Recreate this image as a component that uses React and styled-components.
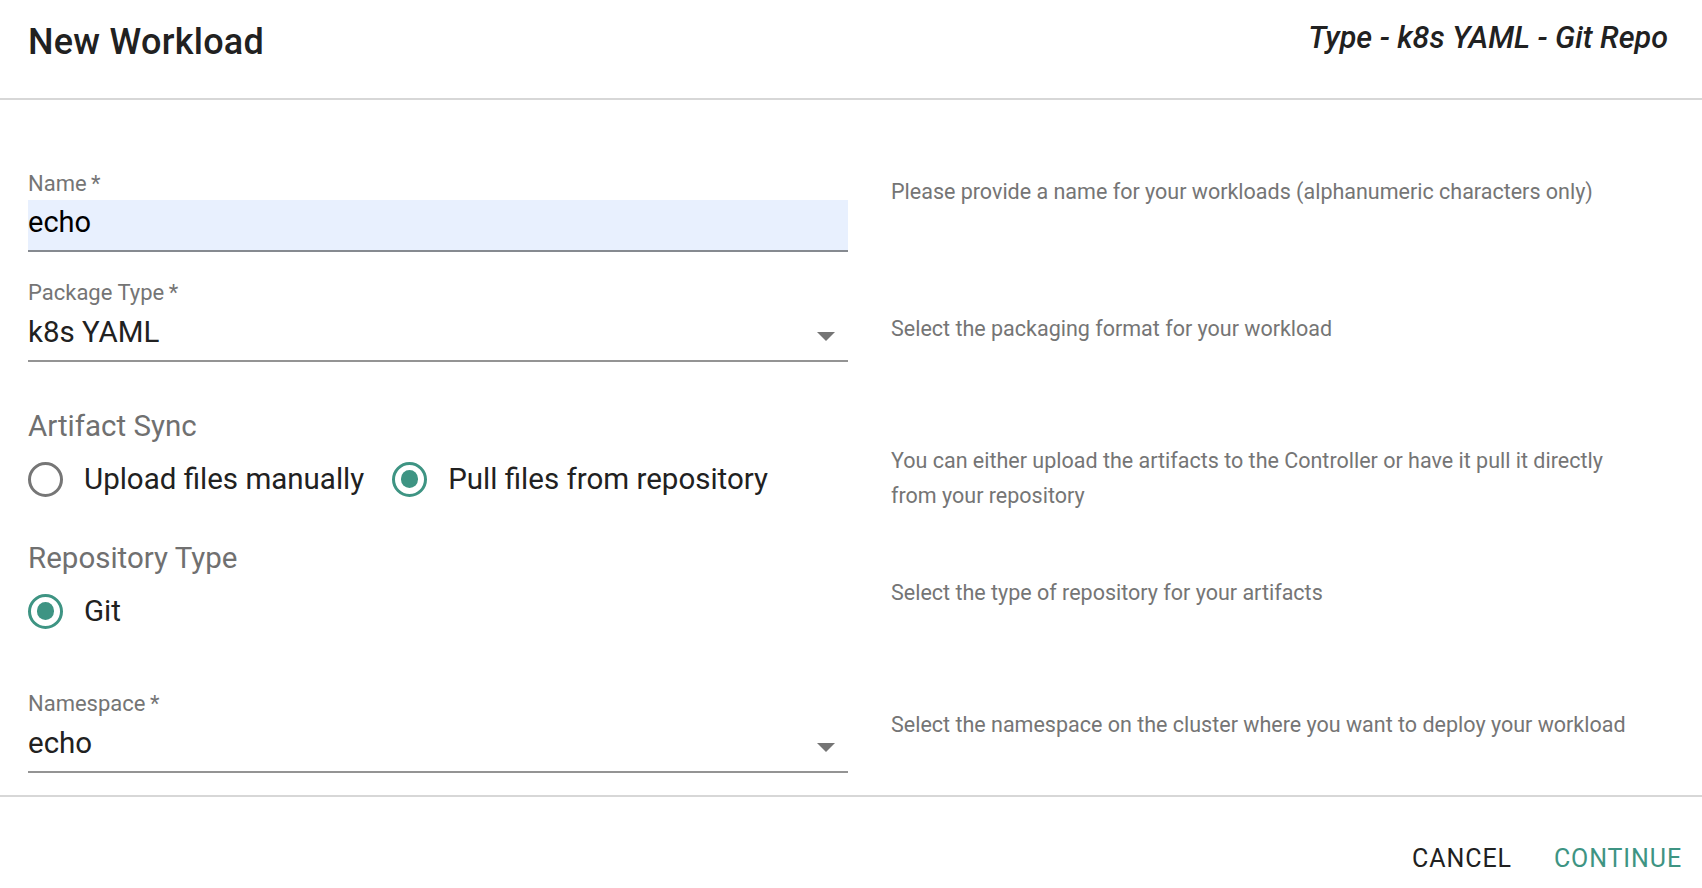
import React from "react";
import styled, { createGlobalStyle } from "styled-components";

const GlobalStyle = createGlobalStyle`
  html, body {
    margin: 0;
    padding: 0;
    background: #fff;
  }
  body {
    font-family: Roboto, "Helvetica Neue", Arial, sans-serif;
    color: rgba(0, 0, 0, 0.87);
  }
  * {
    box-sizing: border-box;
  }
`;

const TEAL = "#3e9483";

const Dialog = styled.div`
  width: 1702px;
  height: 888px;
  display: flex;
  flex-direction: column;
  overflow: hidden;
  background: #fff;
`;

const Header = styled.header`
  display: flex;
  justify-content: space-between;
  align-items: flex-start;
  padding: 14px 34px 28px 28px;
  border-bottom: 2px solid #d7d7d7;
`;

const Title = styled.h2`
  margin: 0;
  font-size: 36px;
  font-weight: 500;
  line-height: 56px;
  letter-spacing: 0.0075em;
  color: #212121;
`;

const TypeTag = styled.div`
  font-size: 30.5px;
  font-weight: 500;
  font-style: italic;
  line-height: 48px;
  color: #212121;
`;

const Content = styled.div`
  flex: 1;
  padding: 72px 28px 0;
`;

const Row = styled.div`
  display: grid;
  grid-template-columns: 820px 1fr;
  column-gap: 43px;
  margin-top: ${(p) => p.$top || 0}px;
`;

const Field = styled.div`
  display: flex;
  flex-direction: column;
`;

const FieldLabel = styled.label`
  font-size: 22px;
  line-height: 24px;
  color: #757575;
`;

const FilledInput = styled.div`
  margin-top: 4px;
  height: 52px;
  padding: 0 0 6px;
  background: #e8f0fe;
  border-bottom: 2px solid #868a90;
  font-size: 29px;
  line-height: 44px;
  color: #000;
`;

const SelectBox = styled.div`
  display: flex;
  align-items: center;
  justify-content: space-between;
  padding: 7px 13px 8px 0;
  border-bottom: 2px solid #949494;
  font-size: 29.5px;
  line-height: 40px;
  color: #212121;
`;

const Arrow = styled.svg`
  width: 18px;
  height: 9px;
  margin-top: 9px;
  fill: #757575;
`;

const GroupHeading = styled.div`
  font-size: 29.5px;
  line-height: 42px;
  color: #707070;
`;

const RadioGroup = styled.div`
  display: flex;
  align-items: center;
  height: 64px;
`;

const RadioOption = styled.label`
  display: inline-flex;
  align-items: center;
  gap: 21px;
  margin-right: 28px;
  font-size: 29.5px;
  line-height: 40px;
  color: #212121;
  cursor: pointer;
`;

const RadioCircle = styled.span`
  width: 35px;
  height: 35px;
  flex-shrink: 0;
  border-radius: 50%;
  border: 3.5px solid ${(p) => (p.$checked ? TEAL : "#767676")};
  display: flex;
  align-items: center;
  justify-content: center;
  &::after {
    content: "";
    width: 17.5px;
    height: 17.5px;
    border-radius: 50%;
    background: ${TEAL};
    transform: scale(${(p) => (p.$checked ? 1 : 0)});
  }
`;

const Helper = styled.p`
  margin: 0;
  padding-top: ${(p) => p.$offset || 0}px;
  max-width: 750px;
  font-size: 21.5px;
  line-height: 35px;
  color: #757575;
`;

const Footer = styled.footer`
  display: flex;
  justify-content: flex-end;
  padding: 29px 6px 0;
  border-top: 2px solid #d7d7d7;
  height: 93px;
`;

const TextButton = styled.button`
  background: none;
  border: 0;
  margin-left: 14px;
  padding: 10.5px 14px;
  font-family: inherit;
  font-size: 25px;
  font-weight: 400;
  line-height: 1.75;
  letter-spacing: 0.9px;
  text-transform: uppercase;
  color: ${(p) => (p.$primary ? TEAL : "#212121")};
  cursor: pointer;
  height: 64px;
`;

const DropArrow = () => (
  <Arrow viewBox="0 0 10 5">
    <path d="M0 0l5 5 5-5z" />
  </Arrow>
);

const Radio = ({ checked, children }) => (
  <RadioOption>
    <RadioCircle $checked={checked} />
    {children}
  </RadioOption>
);

const App = () => {
  return (
    <>
      <GlobalStyle />
      <Dialog>
        <Header>
          <Title>New Workload</Title>
          <TypeTag>Type - k8s YAML - Git Repo</TypeTag>
        </Header>

        <Content>
          <Row>
            <Field>
              <FieldLabel>Name&thinsp;*</FieldLabel>
              <FilledInput>echo</FilledInput>
            </Field>
            <Helper $offset={2}>
              Please provide a name for your workloads (alphanumeric characters only)
            </Helper>
          </Row>

          <Row $top={29}>
            <Field>
              <FieldLabel>Package Type&thinsp;*</FieldLabel>
              <SelectBox>
                k8s YAML
                <DropArrow />
              </SelectBox>
            </Field>
            <Helper $offset={30}>Select the packaging format for your workload</Helper>
          </Row>

          <Row $top={43}>
            <Field>
              <GroupHeading>Artifact Sync</GroupHeading>
              <RadioGroup>
                <Radio>Upload files manually</Radio>
                <Radio checked>Pull files from repository</Radio>
              </RadioGroup>
            </Field>
            <Helper $offset={38}>
              You can either upload the artifacts to the Controller or have it pull it directly
              from your repository
            </Helper>
          </Row>

          <Row $top={24}>
            <Field>
              <GroupHeading>Repository Type</GroupHeading>
              <RadioGroup>
                <Radio checked>Git</Radio>
              </RadioGroup>
            </Field>
            <Helper $offset={38}>Select the type of repository for your artifacts</Helper>
          </Row>

          <Row $top={49}>
            <Field>
              <FieldLabel>Namespace&thinsp;*</FieldLabel>
              <SelectBox>
                echo
                <DropArrow />
              </SelectBox>
            </Field>
            <Helper $offset={15}>
              Select the namespace on the cluster where you want to deploy your workload
            </Helper>
          </Row>
        </Content>

        <Footer>
          <TextButton>Cancel</TextButton>
          <TextButton $primary>Continue</TextButton>
        </Footer>
      </Dialog>
    </>
  );
};

export default App;
